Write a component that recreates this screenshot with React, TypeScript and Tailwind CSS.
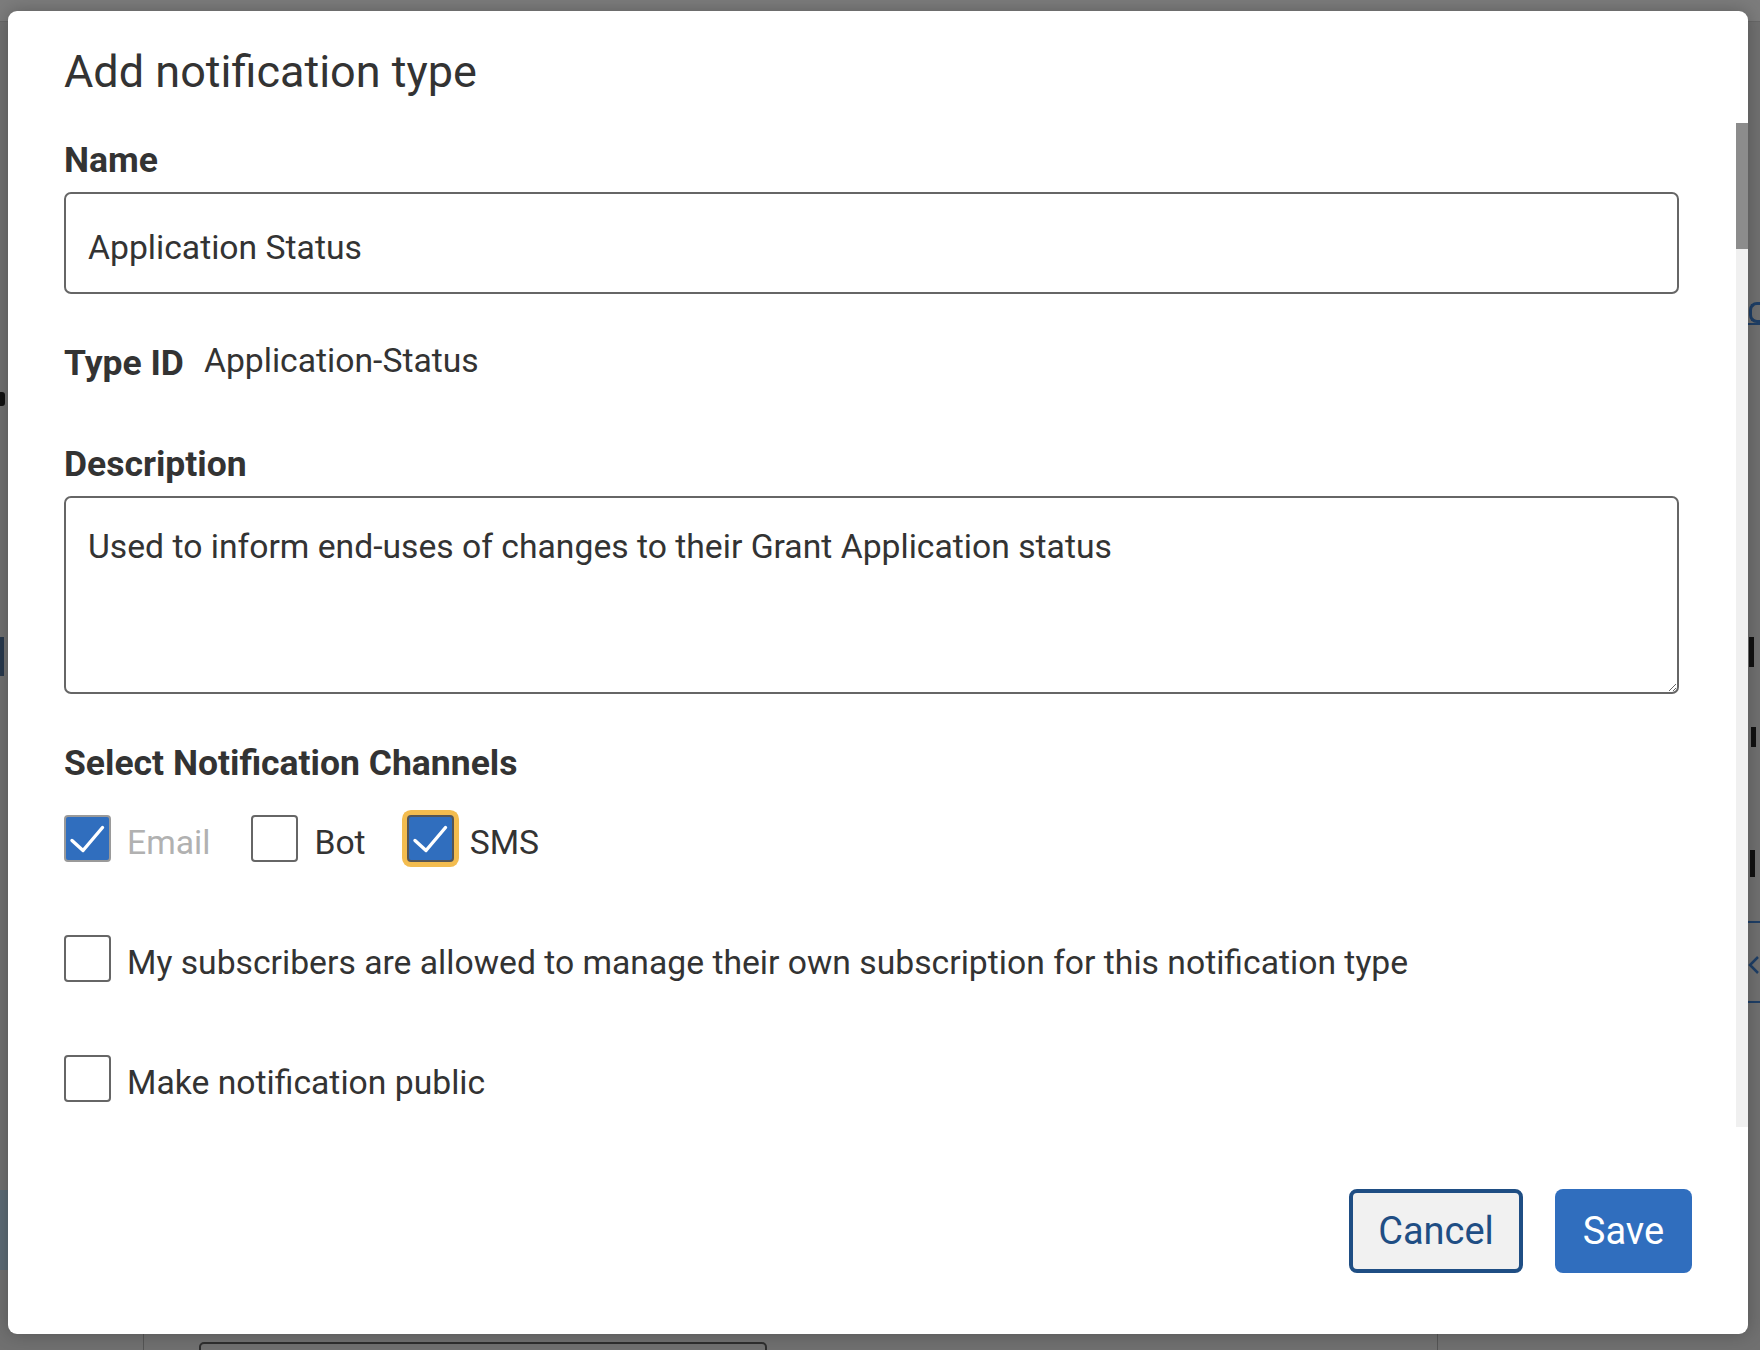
import React from "react";
import clsx from "clsx";

function Tick() {
   return (
      <svg viewBox="2 2 43 43" className="h-full w-full" fill="none">
         <path d="M8 25.5 L19 35.5 L38.5 12.5" stroke="white" strokeWidth="3.4" strokeLinecap="round" strokeLinejoin="round" />
      </svg>
   );
}

type BoxProps = { checked?: boolean; focused?: boolean; disabled?: boolean; label: string };

function Checkbox({ checked, focused, disabled, label }: BoxProps) {
   return (
      <label className="flex items-center gap-[16px]">
         <span
            className={clsx(
               "flex h-[47px] w-[47px] shrink-0 rounded-[4px] border-2",
               checked ? "bg-[#306ebe]" : "bg-white",
               disabled ? "border-[#9a9a9a]" : checked ? "border-[#555]" : "border-[#666]",
               focused && "ring-[5px] ring-[#f3bc4f]"
            )}
         >
            {checked && <Tick />}
         </span>
         <span className={clsx("translate-y-[4px] text-[33.7px] leading-[40px]", disabled ? "text-[#b1b1b1]" : "text-[#333]")}>{label}</span>
      </label>
   );
}

export default function App() {
   return (
      <main className="relative h-[1350px] w-[1760px] overflow-hidden bg-[#707070] font-['Roboto',sans-serif]">
         {/* page behind the overlay */}
         <div className="h-[22px] border-b border-[#686868] bg-[#7c7c7c]" />
         <div className="absolute left-0 top-[392px] h-[14px] w-[5px] rounded-r-[3px] bg-[#111]" />
         <div className="absolute left-0 top-[637px] h-[39px] w-[4px] bg-[#27384c]" />
         <div className="absolute left-0 top-[1190px] h-[80px] w-[10px] bg-[#5d6b75]" />
         <div className="absolute left-[1749px] top-[302px] h-[21px] w-[11px] rounded-l-[8px] border-y-[3px] border-l-[3px] border-[#1f3f66]" />
         <div className="absolute left-[1748px] top-[323px] h-[2px] w-[12px] bg-[#1f3f66]" />
         <div className="absolute left-[1749px] top-[637px] h-[30px] w-[5px] bg-[#111]" />
         <div className="absolute left-[1751px] top-[727px] h-[20px] w-[5px] bg-[#111]" />
         <div className="absolute left-[1750px] top-[850px] h-[27px] w-[5px] bg-[#111]" />
         <div className="absolute left-[1748px] top-[921px] h-[2px] w-[12px] bg-[#1f3f66]" />
         <svg className="absolute left-[1748px] top-[953px] h-[24px] w-[12px]" viewBox="0 0 12 24" fill="none">
            <path d="M10 4 L2 12 L10 20" stroke="#1f3f66" strokeWidth="2.5" />
         </svg>
         <div className="absolute left-[1748px] top-[1001px] h-[2px] w-[12px] bg-[#1f3f66]" />
         <div className="absolute left-[143px] top-[1320px] h-[30px] w-[1px] bg-[#555]" />
         <div className="absolute left-[1437px] top-[1320px] h-[30px] w-[1px] bg-[#555]" />
         <div className="absolute left-[199px] top-[1342px] h-[30px] w-[568px] rounded-[5px] border-2 border-[#2e2e2e]" />

         {/* modal */}
         <section className="absolute left-[8px] top-[11px] flex h-[1323px] w-[1740px] flex-col rounded-[9px] bg-white text-[#333] shadow-[0_0_18px_rgba(0,0,0,0.25)]">
            <header className="h-[112px] shrink-0 pl-[56px] pt-[33px]">
               <h1 className="text-[45px] font-normal leading-[56px]">Add notification type</h1>
            </header>

            <div className="flex h-[1004px] shrink-0">
               <div className="flex flex-1 flex-col overflow-hidden pl-[56px] pr-[57px] pt-[17px]">
                  <label className="text-[35.5px] font-bold leading-[40px]">Name</label>
                  <input
                     defaultValue="Application Status"
                     className="mt-[12px] h-[102px] w-full rounded-[7px] border-2 border-[#666] bg-white pl-[22px] pt-[8px] text-[33.7px] text-[#333] outline-none"
                  />

                  <div className="mt-[45px] flex h-[45px] items-start gap-[20px]">
                     <span className="mt-[4px] text-[35.5px] font-bold leading-[40px]">Type ID</span>
                     <span className="mt-[2px] text-[33.7px] leading-[40px]">Application-Status</span>
                  </div>

                  <label className="mt-[60px] text-[35.5px] font-bold leading-[40px]">Description</label>
                  <textarea
                     defaultValue="Used to inform end-uses of changes to their Grant Application status"
                     className="mt-[12px] h-[198px] w-full shrink-0 resize-y rounded-[7px] border-2 border-[#666] bg-white pl-[22px] pt-[29px] text-[33.7px] leading-[40px] text-[#333] outline-none"
                  />

                  <h2 className="mt-[49px] text-[35.5px] font-bold leading-[40px]">Select Notification Channels</h2>
                  <div className="mt-[32px] flex items-center gap-[41px]">
                     <Checkbox checked disabled label="Email" />
                     <Checkbox label="Bot" />
                     <Checkbox checked focused label="SMS" />
                  </div>

                  <div className="mt-[73px]">
                     <Checkbox label="My subscribers are allowed to manage their own subscription for this notification type" />
                  </div>
                  <div className="mt-[73px]">
                     <Checkbox label="Make notification public" />
                  </div>
               </div>
               <div className="w-[12px] shrink-0 bg-[#f0f0f0]">
                  <div className="h-[126px] bg-[#8c8c8c]" />
               </div>
            </div>

            <footer className="flex flex-1 items-start justify-end gap-[32px] pr-[56px] pt-[62px]">
               <button className="flex h-[84px] w-[174px] items-center justify-center rounded-[8px] border-4 border-[#1f4e84] bg-[#f1f1f1] text-[38px] text-[#1f4e84]">
                  Cancel
               </button>
               <button className="flex h-[84px] w-[137px] items-center justify-center rounded-[8px] bg-[#306ebe] text-[38px] text-white">
                  Save
               </button>
            </footer>
         </section>
      </main>
   );
}
